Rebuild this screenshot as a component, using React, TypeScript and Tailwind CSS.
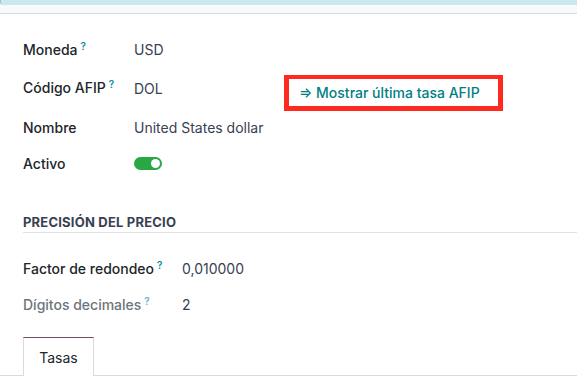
import React from 'react';

const Help = ({ muted = false }: { muted?: boolean }) => (
    <sup className={`ml-[3px] text-[10px] font-semibold ${muted ? 'text-[#5fb3cc]' : 'text-[#0b86ad]'}`}>?</sup>
);

const Toggle = () => (
    <div className="w-[28px] h-[13px] rounded-full bg-[#28a745] flex items-center justify-end pr-[2px]">
        <span className="w-[9px] h-[9px] rounded-full bg-white" />
    </div>
);

export default function App() {
    return (
        <div className="w-[577px] h-[387px] overflow-hidden bg-white font-['Inter',sans-serif] text-[14px] text-[#212529]">
            {/* top of the view */}
            <div className="h-[5px] bg-[#cce8ef] rounded-bl-[3px] border-l border-[#8fcbd9]" />
            <div className="h-[9px] bg-[#f8f9fa] border-b border-[#d8dadd]" />

            <div className="pt-[17px]">
                {/* main group */}
                <div className="pl-[23px]">
                    <div className="flex items-center h-[36px]">
                        <div className="w-[111px] font-medium">Moneda<Help /></div>
                        <div className="text-[#374151] mt-[1px]">USD</div>
                    </div>
                    <div className="flex items-center h-[42px]">
                        <div className="w-[111px] font-medium -mt-[2px]">Código AFIP<Help /></div>
                        <div className="w-[150px] text-[#374151] mt-[1px]">DOL</div>
                        <div className="self-start mt-[8px] w-[219px] h-[36px] border-[5px] border-t-[4px] border-[#ff2a1f] flex items-center pl-[10px] text-[#017e84] font-medium">
                            ⇒ Mostrar última tasa AFIP
                        </div>
                    </div>
                    <div className="flex items-center h-[36px]">
                        <div className="w-[111px] font-medium">Nombre</div>
                        <div className="text-[#374151]">United States dollar</div>
                    </div>
                    <div className="flex items-center h-[36px]">
                        <div className="w-[111px] font-medium">Activo</div>
                        <Toggle />
                    </div>
                </div>

                {/* section */}
                <div className="ml-[23px] mt-[33px] pb-[2px] border-b border-[#dee2e6]">
                    <div className="h-[16px] leading-[16px] text-[13px] font-bold uppercase tracking-[0.2px] text-[#374151]">
                        Precisión del precio
                    </div>
                </div>

                <div className="pl-[23px] mt-[17px]">
                    <div className="flex items-center h-[36px]">
                        <div className="w-[159px] font-medium">Factor de redondeo<Help /></div>
                        <div className="text-[#374151]">0,010000</div>
                    </div>
                    <div className="flex items-center h-[36px]">
                        <div className="w-[159px] font-medium text-[#6c757d]">Dígitos decimales<Help muted /></div>
                        <div className="text-[#374151]">2</div>
                    </div>
                </div>

                {/* notebook */}
                <div className="mt-[15px] flex border-b border-[#d8dadd] pl-[23px]">
                    <div className="-mb-px w-[71px] h-[39px] bg-white border-t border-t-[#714b67] border-x border-x-[#d8dadd] flex items-center justify-center text-[#212529]">
                        Tasas
                    </div>
                </div>
            </div>
        </div>
    );
}
